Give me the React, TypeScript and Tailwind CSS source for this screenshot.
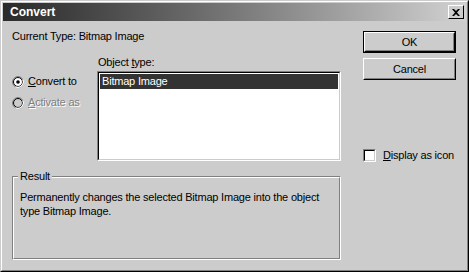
import React from "react";

const raised =
  "border border-t-white border-l-white border-r-black border-b-black";

function Button({ label, def }: { label: string; def?: boolean }) {
  const inner = (
    <div className={`${raised} w-full h-full`}>
      <div className="w-full h-full border border-t-[#cccccc] border-l-[#cccccc] border-r-[#808080] border-b-[#808080] flex items-center justify-center">
        {label}
      </div>
    </div>
  );
  return def ? (
    <div className="w-[93px] h-[22px] border border-black">{inner}</div>
  ) : (
    <div className="w-[93px] h-[22px]">{inner}</div>
  );
}

function Radio({ checked }: { checked?: boolean }) {
  return (
    <svg width="12" height="12" viewBox="0 0 12 12" className="shrink-0">
      <circle cx="6" cy="6" r="5.5" fill="none" stroke="#808080" />
      <circle cx="6" cy="6" r="4.5" fill={checked ? "#ffffff" : "#cccccc"} stroke="#000" strokeWidth="1" />
      <path d="M10.8 3.5 A5.5 5.5 0 0 1 3.5 10.8" stroke="#ffffff" fill="none" strokeWidth="1.2" />
      {checked && <circle cx="6" cy="6" r="1.8" fill="#000" />}
    </svg>
  );
}

export default function App() {
  return (
    <div
      className="w-[469px] h-[272px] bg-[#cccccc] border border-t-[#cccccc] border-l-[#cccccc] border-r-black border-b-black text-[11px] leading-[13px] tracking-[-0.2px] text-black"
      style={{ fontFamily: '"Liberation Sans", Arial, sans-serif' }}
    >
      <div className="w-full h-full border border-t-white border-l-white border-r-[#808080] border-b-[#808080] p-px flex flex-col">
        {/* Title bar */}
        <div className="h-[18px] bg-gradient-to-r from-[#2a2a2a] to-[#d2d2d2] flex items-center pl-[7px] pr-[2px]">
          <span className="font-bold text-white text-[12px] tracking-normal flex-1">Convert</span>
          <div className="w-[16px] h-[14px] bg-[#cccccc] border border-t-white border-l-white border-r-black border-b-black flex items-center justify-center">
            <svg width="8" height="7" viewBox="0 0 8 7">
              <path d="M0 0 L2 0 L4 2 L6 0 L8 0 L5 3.5 L8 7 L6 7 L4 5 L2 7 L0 7 L3 3.5 Z" fill="#000" />
            </svg>
          </div>
        </div>
        {/* Body */}
        <div className="flex flex-1 pl-[9px]">
          <div className="w-[329px] flex flex-col">
            <div className="mt-[9px]">Current Type: Bitmap Image</div>
            <div className="flex mt-[13px]">
              <div className="w-[85px] pt-[19px] flex flex-col gap-[8px]">
                <div className="flex items-center gap-[4px]">
                  <Radio checked />
                  <span>
                    <span className="underline">C</span>onvert to
                  </span>
                </div>
                <div className="flex items-center gap-[4px]">
                  <Radio />
                  <span className="text-[#808080]" style={{ textShadow: "1px 1px 0 #fff" }}>
                    <span className="underline">A</span>ctivate as
                  </span>
                </div>
              </div>
              <div className="flex flex-col">
                <div className="pl-px mb-[2px]">
                  Object <span className="underline">t</span>ype:
                </div>
                <div className="w-[244px] h-[90px] border border-t-[#808080] border-l-[#808080] border-r-white border-b-white">
                  <div className="w-full h-full border border-t-black border-l-black border-r-[#cccccc] border-b-[#cccccc] bg-white p-px">
                    <div className="bg-[#333333] text-white h-[15px] pl-[2px] leading-[15px]">Bitmap Image</div>
                  </div>
                </div>
              </div>
            </div>
            {/* Result group */}
            <div className="relative mt-[15px] h-[84px] border border-t-[#808080] border-l-[#808080] border-r-white border-b-white">
              <div className="w-full h-full border border-t-white border-l-white border-r-[#808080] border-b-[#808080] pt-[12px] pl-[6px] leading-[14px]">
                Permanently changes the selected Bitmap Image into the object
                <br />
                type Bitmap Image.
              </div>
              <span className="absolute left-[5px] top-[-7px] bg-[#cccccc] px-[2px]">Result</span>
            </div>
          </div>
          <div className="ml-[22px] flex flex-col pt-[10px]">
            <Button label="OK" def />
            <div className="mt-[5px]">
              <Button label="Cancel" />
            </div>
            <div className="mt-[69px] flex items-center gap-[7px]">
              <div className="w-[13px] h-[13px] border border-t-[#808080] border-l-[#808080] border-r-white border-b-white">
                <div className="w-full h-full border border-t-black border-l-black border-r-[#cccccc] border-b-[#cccccc] bg-white" />
              </div>
              <span>
                <span className="underline">D</span>isplay as icon
              </span>
            </div>
          </div>
        </div>
      </div>
    </div>
  );
}
